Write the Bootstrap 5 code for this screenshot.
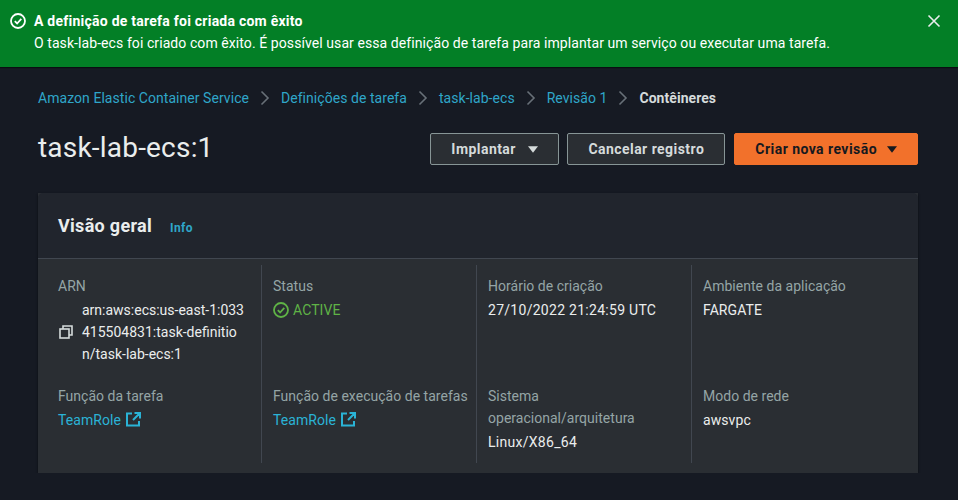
<!DOCTYPE html>
<html lang="pt-BR">
<head>
  <meta charset="UTF-8"/>
  <meta name="viewport" content="width=device-width, initial-scale=1.0"/>
  <title>task-lab-ecs:1</title>
  <link href="https://cdn.jsdelivr.net/npm/bootstrap@5.3.0/dist/css/bootstrap.min.css" rel="stylesheet"/>
  <style>
    body { background-color: #161a23; font-family: Roboto, "Liberation Sans", sans-serif; font-size: 14px; line-height: 22px; letter-spacing: .08px; color: #d5dbdb; }
    a { text-decoration: none; }
    .flash-ok { background-color: #037f26; color: #fff; height: 67px; padding: 10px 16px 0 10px; border: 0; border-radius: 0; margin: 0; box-shadow: 0 1px 1px #0b0d12; }
    .flash-ok .flash-title { font-weight: 700; letter-spacing: .24px; }
    .flash-icon { width: 16px; height: 16px; margin-top: 3px; margin-right: 8px; flex: none; }
    .flash-close { background: none; border: 0; padding: 0; width: 16px; height: 16px; margin-top: 3px; color: #eaeded; line-height: 0; }
    .page-wrap { padding: 20px 40px 0 38px; }
    .crumbs { margin: 0; height: 22px; flex-wrap: nowrap; align-items: center; letter-spacing: .05px; }
    .crumbs a { color: #2fa6c9; }
    .crumbs .here { color: #d5dbdb; font-weight: 700; }
    .crumb-sep { width: 16px; height: 16px; margin: 0 8px; color: #687078; flex: none; }
    .head-row { margin-top: 24px; height: 32px; }
    .page-title { font-size: 28px; line-height: 32px; font-weight: 400; letter-spacing: .2px; color: #eaeded; margin: 0 0 2px; }
    .act-btn { height: 32px; border-radius: 2px; padding: 0 20px; font-size: 14px; line-height: 30px; font-weight: 700; letter-spacing: .45px; background: #2a2e33; border: 1px solid #879596; color: #d5dbdb; white-space: nowrap; display: flex; align-items: center; }
    .act-btn.act-main { background: #f2712b; border-color: #f2712b; color: #16191f; }
    .act-deploy { width: 129px; }
    .act-deploy .caret-down { margin-left: 12px; }
    .act-cancel { width: 158px; justify-content: center; padding: 0; margin: 0 9px 0 8px; }
    .caret-down { width: 10px; height: 7px; margin-left: 10px; }
    .ov-card { margin-top: 28px; height: 280px; background: #2a2e33; border: 0; border-radius: 0; box-shadow: 0 1px 2px #0b0d12; color: #eaeded; }
    .ov-head { background: #21252d; height: 66px; padding: 0 20px; border-bottom: 1px solid #414750; border-radius: 0; }
    .ov-head h2 { font-size: 18px; line-height: 22px; font-weight: 700; letter-spacing: .3px; margin: 0; color: #eaeded; }
    .ov-head a { font-size: 12px; font-weight: 700; letter-spacing: .4px; color: #2fa6c9; margin-left: 18px; padding-top: 4px; }
    .ov-body { padding: 6px 11px 10px 9px; height: 214px; }
    .ov-cell { padding: 10px 6px 10px 11px; border-right: 1px solid #414750; }
    .ov-cell.ov-last { border-right: 0; }
    .ov-label { color: #95a5a6; letter-spacing: .02px; }
    .ov-val { margin-top: 2px; }
    .num-val { letter-spacing: .28px; }
    .arn-text { word-break: break-all; width: 167px; letter-spacing: 0; }
    .copy-ic { width: 14px; height: 14px; margin: 0 9px 0 1px; color: #d5dbdb; flex: none; }
    .ok-text { color: #5fb346; }
    .ok-ic { width: 16px; height: 16px; margin-right: 4px; }
    .ext-link { color: #2ab3d6; }
    .ext-ic { width: 15px; height: 15px; margin-left: 5px; vertical-align: -2px; }
  </style>
</head>
<body>
  <div class="alert flash-ok d-flex">
    <svg class="flash-icon" viewBox="0 0 16 16" fill="none" stroke="currentColor" stroke-width="1.8"><circle cx="8" cy="8" r="7"/><path d="M4.8 8.2l2.3 2.3 4.2-4.6"/></svg>
    <div class="flex-grow-1">
      <div class="flash-title">A definição de tarefa foi criada com êxito</div>
      <div>O task-lab-ecs foi criado com êxito. É possível usar essa definição de tarefa para implantar um serviço ou executar uma tarefa.</div>
    </div>
    <button class="flash-close" type="button" aria-label="Fechar">
      <svg viewBox="0 0 16 16" fill="none" stroke="currentColor" stroke-width="1.6"><path d="M2.5 2.5l11 11M13.5 2.5l-11 11"/></svg>
    </button>
  </div>

  <div class="page-wrap">
    <nav class="crumbs d-flex">
      <a href="#">Amazon Elastic Container Service</a>
      <svg class="crumb-sep" viewBox="0 0 16 16" fill="none" stroke="currentColor" stroke-width="1.6"><path d="M4.5 1.5L11 8l-6.5 6.5"/></svg>
      <a href="#">Definições de tarefa</a>
      <svg class="crumb-sep" viewBox="0 0 16 16" fill="none" stroke="currentColor" stroke-width="1.6"><path d="M4.5 1.5L11 8l-6.5 6.5"/></svg>
      <a href="#">task-lab-ecs</a>
      <svg class="crumb-sep" viewBox="0 0 16 16" fill="none" stroke="currentColor" stroke-width="1.6"><path d="M4.5 1.5L11 8l-6.5 6.5"/></svg>
      <a href="#">Revisão 1</a>
      <svg class="crumb-sep" viewBox="0 0 16 16" fill="none" stroke="currentColor" stroke-width="1.6"><path d="M4.5 1.5L11 8l-6.5 6.5"/></svg>
      <span class="here">Contêineres</span>
    </nav>

    <div class="head-row d-flex align-items-center justify-content-between">
      <h1 class="page-title">task-lab-ecs:1</h1>
      <div class="d-flex">
        <button class="act-btn act-deploy" type="button">Implantar<svg class="caret-down" viewBox="0 0 12 8" fill="currentColor"><path d="M0 0h12L6 8z"/></svg></button>
        <button class="act-btn act-cancel" type="button">Cancelar registro</button>
        <button class="act-btn act-main" type="button">Criar nova revisão<svg class="caret-down" viewBox="0 0 12 8" fill="currentColor"><path d="M0 0h12L6 8z"/></svg></button>
      </div>
    </div>

    <div class="card ov-card">
      <div class="card-header ov-head d-flex align-items-center">
        <h2>Visão geral</h2>
        <a href="#">Info</a>
      </div>
      <div class="ov-body">
        <div class="row g-0 h-100">
          <div class="col-3 ov-cell">
            <div class="ov-label">ARN</div>
            <div class="ov-val d-flex align-items-center">
              <svg class="copy-ic" viewBox="0 0 14 14" fill="none" stroke="currentColor" stroke-width="1.6"><rect x="1" y="4" width="9" height="9"/><path d="M4 4V1h9v9h-3"/></svg>
              <span class="arn-text">arn:aws:ecs:us-east-1:033415504831:task-definition/task-lab-ecs:1</span>
            </div>
          </div>
          <div class="col-3 ov-cell">
            <div class="ov-label">Status</div>
            <div class="ov-val ok-text d-flex align-items-center">
              <svg class="ok-ic" viewBox="0 0 16 16" fill="none" stroke="currentColor" stroke-width="1.8"><circle cx="8" cy="8" r="7"/><path d="M4.8 8.2l2.3 2.3 4.2-4.6"/></svg>
              ACTIVE
            </div>
          </div>
          <div class="col-3 ov-cell">
            <div class="ov-label">Horário de criação</div>
            <div class="ov-val num-val">27/10/2022 21:24:59 UTC</div>
          </div>
          <div class="col-3 ov-cell ov-last">
            <div class="ov-label">Ambiente da aplicação</div>
            <div class="ov-val">FARGATE</div>
          </div>
          <div class="col-3 ov-cell">
            <div class="ov-label">Função da tarefa</div>
            <div class="ov-val"><a class="ext-link" href="#">TeamRole<svg class="ext-ic" viewBox="0 0 15 15" fill="none" stroke="currentColor" stroke-width="2"><path d="M6 1.5H1v12h12V9M8.5 1H14v5.5M14 1L7 8"/></svg></a></div>
          </div>
          <div class="col-3 ov-cell">
            <div class="ov-label">Função de execução de tarefas</div>
            <div class="ov-val"><a class="ext-link" href="#">TeamRole<svg class="ext-ic" viewBox="0 0 15 15" fill="none" stroke="currentColor" stroke-width="2"><path d="M6 1.5H1v12h12V9M8.5 1H14v5.5M14 1L7 8"/></svg></a></div>
          </div>
          <div class="col-3 ov-cell">
            <div class="ov-label">Sistema operacional/arquitetura</div>
            <div class="ov-val num-val">Linux/X86_64</div>
          </div>
          <div class="col-3 ov-cell ov-last">
            <div class="ov-label">Modo de rede</div>
            <div class="ov-val">awsvpc</div>
          </div>
        </div>
      </div>
    </div>
  </div>

  <script src="https://cdn.jsdelivr.net/npm/bootstrap@5.3.0/dist/js/bootstrap.bundle.min.js"></script>
</body>
</html>
